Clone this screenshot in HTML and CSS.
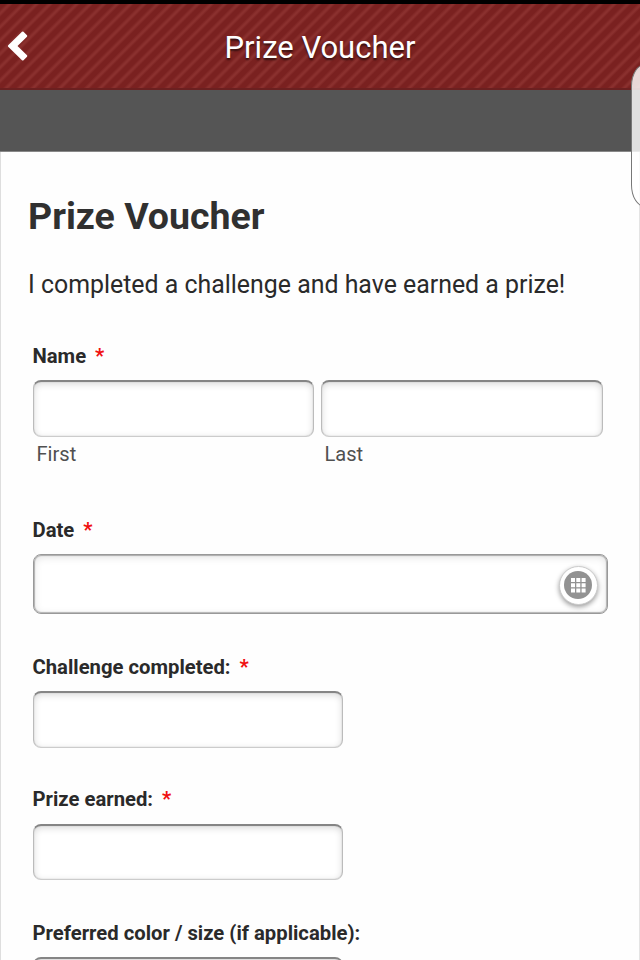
FILE: index.html
```html
<!DOCTYPE html>
<html lang="en">
<head>
<meta charset="utf-8">
<title>Prize Voucher</title>
<link rel="stylesheet" href="styles.css">
</head>
<body>
<header class="topbar">
  <svg class="back" viewBox="0 0 28 34" aria-hidden="true"><path d="M23.5 2.8 27 6.3Q27.6 7 27 7.7L17.5 17 27 26.3Q27.6 27 27 27.7L23.5 31.2Q22.8 31.8 22 31.2L8.2 17.7Q7.5 17 8.2 16.3L22 2.8Q22.8 2.2 23.5 2.8Z"/></svg>
  <span class="topbar-title">Prize Voucher</span>
</header>
<div class="subbar"></div>
<main class="form">
  <h1 class="heading">Prize Voucher</h1>
  <p class="intro">I completed a challenge and have earned a prize!</p>
  <section class="field name-field">
    <div class="label">Name<span class="req">*</span></div>
    <div class="name-row">
      <div class="first"><input class="input" aria-label="First"><div class="hint">First</div></div>
      <div class="last"><input class="input" aria-label="Last"><div class="hint">Last</div></div>
    </div>
  </section>
  <section class="field date-field">
    <div class="label">Date<span class="req">*</span></div>
    <div class="date-box">
      <span class="date-btn"><svg viewBox="0 0 28 28" width="28" height="28" aria-hidden="true"><circle cx="14" cy="14" r="14" fill="#929292"/><path fill="#fff" d="M7 7h4v4H7zM12.3 7h4v4h-4zM17.6 7h4v4h-4zM7 12.3h4v4H7zM12.3 12.3h4v4h-4zM17.6 12.3h4v4h-4zM7 17.6h4v4H7zM12.3 17.6h4v4h-4zM17.6 17.6h4v4h-4z"/></svg></span>
    </div>
  </section>
  <section class="field challenge-field">
    <div class="label">Challenge completed:<span class="req">*</span></div>
    <input class="input short" aria-label="Challenge completed">
  </section>
  <section class="field prize-field">
    <div class="label">Prize earned:<span class="req">*</span></div>
    <input class="input short" aria-label="Prize earned">
  </section>
  <section class="field">
    <div class="label">Preferred color / size (if applicable):</div>
    <input class="input short" aria-label="Preferred color / size">
  </section>
</main>
<div class="edge-handle"></div>
</body>
</html>
```

FILE: styles.css
```css
* { box-sizing: border-box; }
body {
  margin: 0;
  height: 960px;
  overflow: hidden;
  position: relative;
  background: #fefefe;
  font-family: Roboto, "Liberation Sans", sans-serif;
  color: #2a2a2a;
}
.topbar {
  height: 90px;
  border-top: 4px solid #000;
  border-bottom: 2px solid #6b2020;
  display: grid;
  grid-template-columns: 36px 1fr 36px;
  align-items: center;
  background: repeating-linear-gradient(135deg, #7a2120 0, #7a2120 4px, #8a302e 6.4px, #8a302e 7.4px, #7a2120 9.5px);
}
.back { width: 28px; height: 34px; fill: #fff; }
.topbar-title {
  text-align: center;
  font-size: 31px;
  line-height: 40px;
  padding-top: 4px;
  color: #fff;
  text-shadow: 0 2px 2px rgba(0, 0, 0, .6);
}
.subbar { height: 62px; background: #555; border-bottom: 1px solid #888; }
.form {
  height: 808px;
  overflow: hidden;
  border-left: 1px solid #dedede;
  border-right: 1px solid #e4e4e4;
  padding: 40px 0 0 27px;
}
.heading { margin: 0; font-size: 37.5px; line-height: 48px; font-weight: 700; color: #303030; }
.intro { margin: 28px 0 0; font-size: 24.9px; line-height: 34px; }
.field { margin-left: 4.5px; }
.name-field { margin-top: 42px; height: 174px; }
.date-field { height: 137px; }
.challenge-field { height: 132px; }
.prize-field { height: 134px; }
.label { height: 36px; line-height: 24px; font-size: 20.25px; font-weight: 700; }
.req { margin-left: 9px; color: #f01010; }
.name-row { display: flex; gap: 7px; }
.first { width: 281px; }
.last { width: 282.5px; }
.input {
  display: block;
  width: 100%;
  height: 57px;
  margin: 0;
  border: 1.5px solid #bbb;
  border-top: 2px solid #858585;
  border-bottom-color: #ccc;
  border-radius: 8px;
  background: #fff;
  box-shadow: inset 0 2px 7px rgba(0, 0, 0, .15), inset 0 0 1px #aaa;
}
.short { width: 310.5px; }
.prize-field .short { margin-top: 1px; height: 56px; }
.hint { padding: 4px 0 0 4px; font-size: 20.1px; line-height: 26px; color: #505050; }
.date-box {
  width: 575px;
  height: 60px;
  border: 1.5px solid #999;
  border-radius: 8px;
  background: #fff;
  box-shadow: inset 0 2px 8px rgba(0, 0, 0, .12), inset 0 0 1px 1px #bbb;
  display: flex;
  align-items: center;
  justify-content: flex-end;
  padding: 2px 9px 0 0;
}
.date-btn {
  width: 39px;
  height: 39px;
  border: 1px solid #ccc;
  border-radius: 50%;
  background: #fff;
  box-shadow: 0 2px 5px rgba(0, 0, 0, .4);
  display: grid;
  place-items: center;
}
.edge-handle {
  position: absolute;
  top: 64px;
  left: 631px;
  width: 40px;
  height: 143px;
  border: 1px solid #777;
  border-radius: 14px / 22px;
  background: rgba(255, 255, 255, .82);
}
```
